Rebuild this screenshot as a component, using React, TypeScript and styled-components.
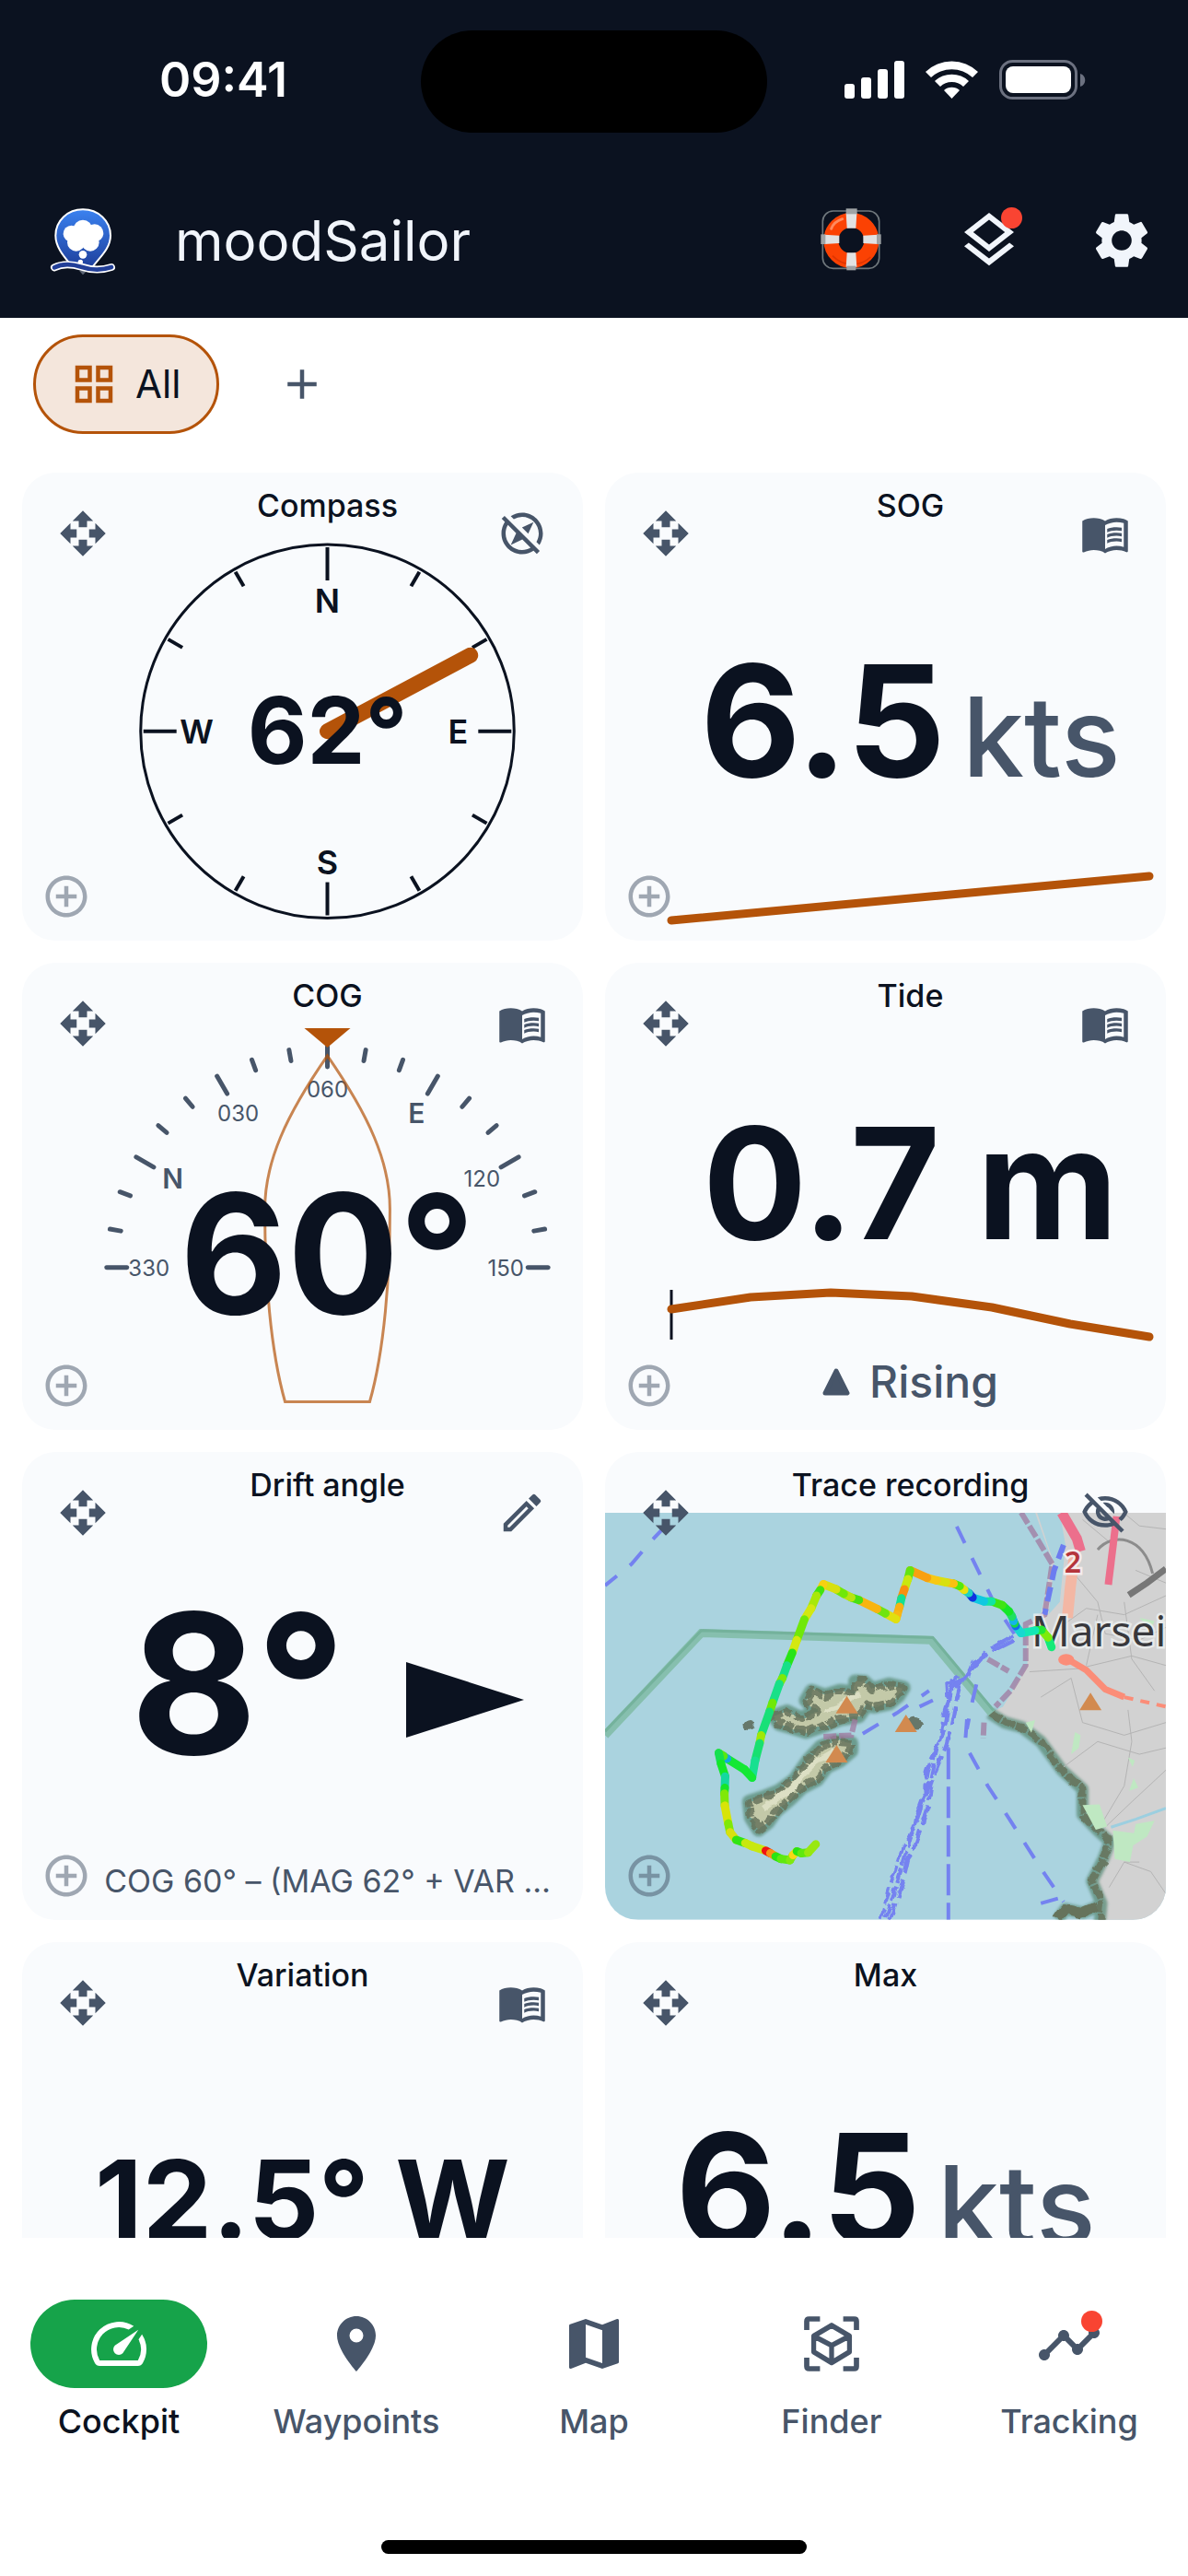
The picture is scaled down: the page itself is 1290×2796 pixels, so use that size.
import React from 'react';
import styled, { createGlobalStyle } from 'styled-components';
import {
  MdAdd,
  MdAddCircleOutline,
  MdGridView,
  MdLocationOn,
  MdMap,
  MdMenuBook,
  MdOpenWith,
  MdOutlineEdit,
  MdOutlineExploreOff,
  MdOutlineLayers,
  MdOutlineSpeed,
  MdOutlineVisibilityOff,
  MdSettings,
  MdTimeline,
} from 'react-icons/md';

const ink = '#0b1220';
const slate = '#475569';
const amber = '#b45309';
const paper = '#f9fbfd';
const alert = '#f94432';

const GlobalStyle = createGlobalStyle`
  * { box-sizing: border-box; }
  body {
    margin: 0;
    background: #fff;
    color: ${ink};
    font-family: Inter, Roboto, "Liberation Sans", sans-serif;
  }
  button { font: inherit; color: inherit; border: 0; padding: 0; background: none; cursor: pointer; }
`;

const Screen = styled.div`
  height: 100vh;
  display: flex;
  flex-direction: column;
  overflow: hidden;
`;

/* ---------- Header ---------- */

const Header = styled.header`
  background: ${ink};
  color: #f1f5fb;
  flex: none;
`;

const StatusBar = styled.div`
  display: grid;
  grid-template-columns: 1fr 376px 1fr;
  align-items: center;
  height: 177px;
  color: #fff;
`;

const StatusSide = styled.div<{ $side: 'left' | 'right' }>`
  display: flex;
  justify-content: center;
  align-items: center;
  gap: 24px;
  padding-bottom: 4px;
  ${(p) => (p.$side === 'left' ? 'padding-left: 28px;' : 'padding-right: 28px;')}
  font-size: 52px;
  line-height: 60px;
  font-weight: 600;
`;

const Island = styled.div`
  height: 111px;
  border-radius: 56px;
  background: #000;
`;

const AppBar = styled.div`
  display: flex;
  align-items: center;
  height: 168px;
  padding-left: 50px;
`;

const AppTitle = styled.h1`
  flex: 1;
  margin: 0 0 0 56px;
  font-size: 60px;
  line-height: 72px;
  font-weight: 400;
`;

const BarButton = styled.button<{ $wide?: boolean }>`
  display: grid;
  place-items: center;
  width: ${(p) => (p.$wide ? 156 : 144)}px;
  height: 144px;
`;

const IconWithBadge = styled.span`
  position: relative;
  display: grid;
`;

const Badge = styled.span`
  position: absolute;
  top: 0;
  right: 0;
  width: 23px;
  height: 23px;
  border-radius: 50%;
  background: ${alert};
`;

/* ---------- Page tabs ---------- */

const Tabs = styled.div`
  display: flex;
  align-items: center;
  gap: 36px;
  flex: none;
  padding: 18px 36px;
`;

const Chip = styled.button`
  && {
    display: flex;
    align-items: center;
    gap: 18px;
    height: 108px;
    padding: 0 39px 0 36px;
    border: 3px solid ${amber};
    border-radius: 54px;
    background: #f4e6dc;
    font-size: 42px;
    line-height: 54px;
  }
  svg { color: ${amber}; }
`;

const AddTab = styled.button`
  && { color: ${slate}; }
  display: grid;
  place-items: center;
  width: 108px;
  height: 108px;
`;

/* ---------- Cards ---------- */

const Board = styled.main`
  flex: 1;
  min-height: 0;
  overflow: hidden;
  display: grid;
  grid-template-columns: 1fr 1fr;
  grid-auto-rows: max-content;
  gap: 24px;
  padding: 24px 24px 0;
`;

const CardBox = styled.section<{ $inset: boolean }>`
  position: relative;
  display: flex;
  flex-direction: column;
  aspect-ratio: 6 / 5;
  min-width: 0;
  overflow: hidden;
  border-radius: 36px;
  background: ${paper};
  padding: 12px 12px 12px ${(p) => (p.$inset ? 66 : 12)}px;
`;

const CardTitle = styled.h2`
  margin: 0 0 6px;
  text-align: center;
  font-size: 34px;
  line-height: 48px;
  font-weight: 500;
`;

const Corner = styled.button<{ $at: 'move' | 'action' | 'add' }>`
  position: absolute;
  z-index: 1;
  display: grid;
  place-items: center;
  ${(p) => (p.$at === 'add' ? 'width: 72px; height: 72px;' : 'width: 108px; height: 108px;')}
  ${(p) => p.$at === 'move' && 'top: 12px; left: 12px;'}
  ${(p) => p.$at === 'action' && 'top: 12px; right: 12px;'}
  ${(p) => p.$at === 'add' && 'bottom: 12px; left: 12px; opacity: 0.5;'}
  && { color: ${slate}; }
`;

const Drawing = styled.svg`
  display: block;
  flex: 1;
  width: 100%;
  min-height: 0;
`;

const Stack = styled.div`
  flex: 1;
  min-height: 0;
  display: grid;
  > * { grid-area: 1 / 1; }
`;

const Reading = styled.div`
  display: flex;
  align-items: baseline;
  justify-content: center;
  align-self: center;
  gap: 18px;
  padding-bottom: 6px;
  white-space: nowrap;
`;

const Big = styled.span<{ $size: number }>`
  font-size: ${(p) => p.$size}px;
  line-height: 200px;
  font-weight: 700;
  white-space: pre;
`;

const Unit = styled.span`
  font-size: 120px;
  line-height: 200px;
  font-weight: 500;
  color: ${slate};
`;

const Trend = styled.svg`
  display: block;
  align-self: end;
  width: 100%;
  height: 66px;
  overflow: visible;
`;

const TideBody = styled.div`
  flex: 1;
  display: flex;
  flex-direction: column;
  align-items: center;
  justify-content: flex-end;
  gap: 14px;
`;

const TideForecast = styled.div`
  width: 100%;
`;

const TideState = styled.div`
  display: flex;
  align-items: center;
  justify-content: center;
  gap: 21px;
  padding-bottom: 4px;
  font-size: 48px;
  line-height: 72px;
  font-weight: 500;
  color: ${slate};
`;

const DriftRow = styled.div`
  flex: 1;
  display: flex;
  align-items: center;
  justify-content: center;
  gap: 66px;
`;

const DriftArrow = styled.svg`
  margin-top: 36px;
`;

const Formula = styled.p`
  margin: 0;
  text-align: center;
  font-size: 34px;
  line-height: 60px;
  color: ${slate};
  white-space: nowrap;
`;

const Centered = styled.div`
  flex: 1;
  display: flex;
  align-items: center;
  justify-content: center;
`;

const MapFrame = styled.div`
  flex: 1;
  min-height: 0;
  display: flex;
  margin: 0 -12px -12px -66px;
`;

interface CardProps {
  title: string;
  action?: React.ReactNode;
  actionLabel?: string;
  inset?: boolean;
  children: React.ReactNode;
}

function Card({ title, action, actionLabel, inset = true, children }: CardProps) {
  return (
    <CardBox $inset={inset} aria-label={title}>
      <CardTitle>{title}</CardTitle>
      <Corner $at="move" type="button" aria-label={`Move ${title}`}>
        <MdOpenWith size={54} />
      </Corner>
      {action && (
        <Corner $at="action" type="button" aria-label={actionLabel}>
          {action}
        </Corner>
      )}
      {children}
      {inset && (
        <Corner $at="add" type="button" aria-label={`Add beside ${title}`}>
          <MdAddCircleOutline size={54} />
        </Corner>
      )}
    </CardBox>
  );
}

/* ---------- Instruments ---------- */

const polar = (deg: number, r: number): [number, number] => [
  Math.sin((deg * Math.PI) / 180) * r,
  -Math.cos((deg * Math.PI) / 180) * r,
];

function Spoke({ deg, from, to, ...rest }: { deg: number; from: number; to: number } & React.SVGProps<SVGLineElement>) {
  const [x1, y1] = polar(deg, from);
  const [x2, y2] = polar(deg, to);
  return <line x1={x1} y1={y1} x2={x2} y2={y2} {...rest} />;
}

function Compass() {
  const marks = Array.from({ length: 12 }, (_, i) => i * 30);
  return (
    <Drawing viewBox="-265 -215 530 430">
      <circle r={203} fill="none" stroke={ink} strokeWidth={3} />
      {marks.map((d) => (
        <Spoke key={d} deg={d} from={d % 90 ? 182 : 164} to={200} stroke={ink} strokeWidth={4} />
      ))}
      {['N', 'E', 'S', 'W'].map((letter, i) => {
        const [x, y] = polar(i * 90, 142);
        return (
          <text key={letter} x={x} y={y + 13} textAnchor="middle" fontSize={36} fontWeight={600} fill={ink}>
            {letter}
          </text>
        );
      })}
      <Spoke deg={62} from={0} to={176} stroke={amber} strokeWidth={17} strokeLinecap="round" />
      <text x={0} y={35} textAnchor="middle" fontSize={100} fontWeight={700} fill={ink}>
        62°
      </text>
    </Drawing>
  );
}

function CourseDial() {
  const marks = Array.from({ length: 19 }, (_, i) => i * 10 - 90);
  const labels: [number, string][] = [
    [-90, '330'],
    [-60, 'N'],
    [-30, '030'],
    [0, '060'],
    [30, 'E'],
    [60, '120'],
    [90, '150'],
  ];
  return (
    <Drawing viewBox="-265 -265 530 430">
      {marks.map((d) => (
        <Spoke key={d} deg={d} from={d % 30 ? 228 : 218} to={240} stroke={slate} strokeWidth={5} strokeLinecap="round" />
      ))}
      {labels.map(([deg, label]) => {
        const [x, y] = polar(deg, 194);
        const cardinal = label.length === 1;
        return (
          <text
            key={label}
            x={x}
            y={y + (cardinal ? 11 : 9)}
            textAnchor="middle"
            fontSize={cardinal ? 30 : 24}
            fontWeight={cardinal ? 600 : 400}
            fill={slate}
          >
            {label}
          </text>
        );
      })}
      <path
        d="M0 -230C45 -165 68 -115 68 -63C68 10 62 90 46 146H-46C-62 90 -68 10 -68 -63C-68 -115 -45 -165 0 -230Z"
        fill="none"
        stroke={amber}
        strokeOpacity={0.7}
        strokeWidth={3}
      />
      <path d="M-25 -260H25L0 -239Z" fill={amber} />
      <text x={0} y={50} textAnchor="middle" fontSize={180} fontWeight={700} fill={ink}>
        60°
      </text>
    </Drawing>
  );
}

const track: [number, number, string][] = [
  [1208, 662, '#14e6a0'], [1199, 632, '#14ea78'], [1182, 608, '#7eea0c'], [1165, 610, '#22e836'], [1128, 618, '#14e8b4'],
  [1114, 596, '#18d8d0'], [1111, 588, '#1468f0'], [1108, 580, '#16d848'], [1104, 566, '#14b4e8'], [1096, 550, '#20e060'],
  [1078, 530, '#14e628'], [1050, 518, '#40e414'], [1030, 518, '#12e4a4'], [1000, 506, '#10c8e0'], [990, 492, '#1030e0'],
  [978, 482, '#20d0c0'], [966, 470, '#e8e010'], [950, 462, '#54e810'], [930, 458, '#fcc010'], [905, 452, '#d8e010'],
  [880, 444, '#f8c814'], [835, 420, '#f8a010'], [829, 448, '#64e410'], [820, 480, '#c8e810'], [812, 508, '#f89010'],
  [807, 535, '#14e090'], [801, 560, '#f8b010'], [798, 574, '#f8b814'], [770, 556, '#e0e010'], [748, 542, '#70e410'],
  [700, 514, '#f8b410'], [680, 506, '#48e010'], [660, 494, '#b8e410'], [640, 480, '#70e808'], [606, 464, '#d8e010'],
  [598, 482, '#f8d010'], [588, 500, '#40e410'], [574, 540, '#a8e808'], [556, 575, '#d4e810'], [536, 640, '#70e808'],
  [524, 680, '#d4e810'], [510, 720, '#28e418'], [498, 760, '#18e088'], [490, 778, '#80e808'], [472, 838, '#18e088'],
  [464, 866, '#70e808'], [442, 940, '#18e078'], [438, 965, '#a0e808'], [426, 1020, '#18e070'], [418, 1074, '#18e090'],
  [398, 1048, '#14e834'], [352, 1014, '#14e834'], [343, 1006, '#14a8e0'], [330, 996, '#58e810'], [336, 1030, '#14e050'],
  [347, 1070, '#14e828'], [346, 1106, '#14d8a0'], [345, 1124, '#18e428'], [346, 1162, '#80e808'], [355, 1218, '#d8e408'],
  [360, 1246, '#80e808'], [376, 1270, '#d8e010'], [400, 1280, '#30e414'], [418, 1290, '#c8e810'], [454, 1304, '#c8e810'],
  [466, 1312, '#f01414'], [480, 1322, '#f89414'], [494, 1330, '#28e414'], [518, 1334, '#60e810'], [526, 1318, '#80e810'],
  [536, 1306, '#f8d814'], [548, 1312, '#28e414'], [566, 1310, '#60e810'], [586, 1284, '#98e810'],
];

function TraceMap() {
  const fine = { vectorEffect: 'non-scaling-stroke' as const, fill: 'none' };
  const shore =
    'M1045 870L1085 900L1130 915L1180 960L1235 1050L1290 1110L1290 1190L1330 1240L1362 1275L1345 1330L1315 1400L1340 1470L1335 1540';
  const land = `M1165 238L1210 390L1180 560L1140 600L1145 720L1120 770L1080 850${shore.replace('M', 'L')}H1510V238Z`;
  const island1 =
    'M475 880L510 865L545 885L590 870L560 830L575 800L610 815L650 800L690 805L690 770L715 772L735 795L780 780L818 790L805 815L780 840L740 850L720 845L700 880L650 890L620 905L560 930L520 915L490 905Z';
  const island2 =
    'M600 975L640 958L680 965L680 990L650 1020L615 1040L590 1080L550 1105L520 1140L480 1180L460 1215L435 1238L415 1200L410 1150L450 1135L490 1115L530 1080L565 1020Z';
  const ferry = [
    'M960 750C930 800 940 860 925 920C900 980 900 1040 880 1110C860 1170 840 1240 825 1310C810 1380 790 1440 770 1522',
    'M948 760C945 830 915 880 915 960C890 1010 870 1060 875 1130C850 1200 850 1260 815 1290C800 1350 780 1420 758 1522',
    'M970 770C950 850 950 890 935 950C925 1010 890 1060 885 1150C860 1220 860 1280 830 1330C820 1390 800 1460 782 1522',
    'M1110 640L1060 670L1020 700L985 750L955 790',
    'M1110 625L1050 665L1010 710L975 760L940 800',
    'M1030 690L1000 710L985 760L930 780L935 860',
  ];
  const peaks = [[668, 845], [824, 904], [641, 1000], [1311, 835]];
  return (
    <Drawing viewBox="0 0 609 442" preserveAspectRatio="xMidYMid slice" role="img" aria-label="Recorded trace off Marseille">
      <defs>
        <filter id="halo" x="-10%" y="-10%" width="120%" height="120%">
          <feGaussianBlur stdDeviation="4" />
        </filter>
        <filter id="rugged" x="-10%" y="-10%" width="120%" height="120%">
          <feTurbulence type="fractalNoise" baseFrequency="0.03" numOctaves="2" seed="4" />
          <feDisplacementMap in="SourceGraphic" scale="24" xChannelSelector="R" yChannelSelector="G" />
          <feGaussianBlur stdDeviation="1.6" />
        </filter>
        <filter id="wavy" x="-20%" y="-5%" width="140%" height="110%">
          <feTurbulence type="fractalNoise" baseFrequency="0.03" numOctaves="2" seed="9" />
          <feDisplacementMap in="SourceGraphic" scale="18" xChannelSelector="R" yChannelSelector="G" />
        </filter>
      </defs>
      <svg width={609} height={442} viewBox="30 238 1480 1284" preserveAspectRatio="none">
        <rect x={30} y={238} width={1480} height={1284} fill="#aad3df" />
        <path d={land} fill="#d2d2d2" />
        <g filter="url(#halo)" strokeLinejoin="round" opacity={0.8}>
          <path {...fine} d={shore} stroke="#5f8f7c" strokeWidth={13} />
          <path {...fine} d={island1} stroke="#5d8f7c" strokeWidth={15} />
          <path {...fine} d={island2} stroke="#5d8f7c" strokeWidth={15} />
          <path {...fine} d="M1225 1522L1245 1488L1290 1500L1330 1480" stroke="#5f8f7c" strokeWidth={13} />
        </g>
        <g filter="url(#rugged)" strokeLinejoin="round">
          <path d={island1} fill="#c3c9a8" />
          <path d={island2} fill="#c3c9a8" />
          <path {...fine} d={island1} stroke="#66735c" strokeWidth={9} strokeDasharray="10 2" strokeOpacity={0.85} />
          <path {...fine} d={island2} stroke="#66735c" strokeWidth={9} strokeDasharray="10 2" strokeOpacity={0.85} />
          <path {...fine} d="M610 860L650 845L700 810M450 1170L520 1110L590 1020L640 985" stroke="#dcdfc4" strokeWidth={6} />
          <path {...fine} d={shore} stroke="#66735c" strokeWidth={8} strokeDasharray="14 2" strokeOpacity={0.85} />
          <path {...fine} d="M1225 1522L1245 1488L1290 1500L1330 1480" stroke="#66735c" strokeWidth={10} />
          <ellipse cx={412} cy={908} rx={16} ry={16} fill="#66776a" />
          <ellipse cx={848} cy={900} rx={20} ry={20} fill="#66776a" />
        </g>
        {/* marine park boundary */}
        <path {...fine} d="M30 940L284 618L890 640L1050 870" stroke="#86bfae" strokeWidth={9} />
        <path {...fine} d="M30 928L284 610L895 632L1055 862" stroke="#74b29c" strokeWidth={3} />
        {/* street grid */}
        <g stroke="#b4b4b4" strokeWidth={1}>
          <path {...fine} d="M1230 600L1300 540L1400 560L1510 500M1260 420L1330 520L1350 620L1440 640L1510 600M1150 740L1280 730L1420 690L1510 720M1400 520L1420 700L1480 800M1330 560L1300 720M1180 820L1260 760L1290 900L1400 940L1510 900M1240 1040L1330 960L1440 1000L1510 980M1350 1230L1420 1150L1510 1050M1410 860L1420 960L1400 1100L1340 1220M1290 260L1360 330M1400 240L1440 280L1510 290M1430 420L1510 460M1440 1340L1400 1340L1360 1420M1400 1340L1470 1370L1510 1440" />
        </g>
        <path {...fine} d="M1330 355C1370 300 1450 310 1475 430" stroke="#8c8c8c" strokeWidth={3} />
        <path {...fine} d="M1412 498L1460 460L1510 415" stroke="#777" strokeWidth={7} />
        <path d="M1140 900l25 -8l-10 40zM1270 930l15 10l-5 40l-20 20zM1290 1160l45 -2l20 70l-30 10zM1370 1240l60 10l-15 90l-40 -10zM1430 1220l50 -10l-20 50l-40 30zM1440 570l40 10l-10 25zM1410 1010l18 10l-6 20zM1425 1075l12 30l-24 10z" fill="#bfe8c2" />
        <path {...fine} d="M1365 1230L1430 1205L1510 1170" stroke="#9ccfe0" strokeWidth={3} />
        {/* harbour wall and main roads */}
        <path d="M1170 238L1230 238L1245 340L1230 520L1200 560L1215 400Z" fill="#aad3df" />
        <path {...fine} d="M1128 238L1170 320L1210 400L1190 560L1140 590L1140 720L1100 800L1060 850M1040 700L1095 738M1030 900L1028 950M690 890L680 940L600 945" stroke="#a07aa0" strokeWidth={6} strokeOpacity={0.75} strokeDasharray="14 3" />
        <path {...fine} d="M1240 340L1215 420L1190 560" stroke="#6c7cf0" strokeWidth={6} strokeDasharray="16 8" />
        <path {...fine} d="M1270 360L1258 470L1250 570" stroke="#f3b7a4" strokeWidth={12} />
        <path {...fine} d="M1235 238L1275 320L1285 360" stroke="#ec6f8c" strokeWidth={11} />
        <path {...fine} d="M1380 250L1358 465" stroke="#ec6f8c" strokeWidth={8} />
        <path {...fine} d="M1250 700L1300 735L1350 795L1400 820" stroke="#fb8d78" strokeWidth={7} />
        <path {...fine} d="M1400 820L1510 850" stroke="#fb8d78" strokeWidth={4} strokeDasharray="10 8" />
        <ellipse cx={1247} cy={702} rx={21} ry={18} fill="#fb8d78" />
        {/* ferry lines */}
        <g stroke="#7482f0" strokeWidth={4}>
          <g filter="url(#wavy)">
            {ferry.map((d, i) => (
              <path key={d} {...fine} d={d} strokeDasharray={`${16 + i * 3} ${4 + i}`} />
            ))}
          </g>
          <g strokeDasharray="20 18">
            <path {...fine} d="M190 280L150 330L100 400L30 468" />
            <path {...fine} d="M958 282L1010 410L1060 530L1110 620" />
            <path {...fine} d="M985 890L980 970L1040 1100L1100 1210L1180 1360L1240 1465" />
            <path {...fine} d="M710 935L800 870L885 800M860 850L895 830" />
            <path {...fine} d="M1010 780L1000 830L985 920" />
          </g>
          <path {...fine} d="M936 980V1522" strokeDasharray="34 8" />
          <path {...fine} d="M1180 1470L1225 1455" />
        </g>
      </svg>
      <text x={508} y={65} fontSize={32} fontFamily="Noto Sans, sans-serif" fontWeight={600} textAnchor="middle" fill="#b5353c" stroke="#f4ecec" strokeWidth={5} paintOrder="stroke">
        2
      </text>
      <text x={463} y={145} fontSize={46} fontFamily="Noto Sans, sans-serif" fill="#38383c" stroke="#eef1f1" strokeWidth={5} strokeOpacity={0.8} paintOrder="stroke">
        Marseille
      </text>
      {peaks.map(([x, y]) => (
        <path key={x} transform={`translate(${(x - 30) * 0.4115} ${(y - 238) * 0.3442})`} d="M0 -10L12 9H-12Z" fill="#d28a4f" />
      ))}
      <svg width={609} height={442} viewBox="30 238 1480 1284" preserveAspectRatio="none">
        {track.slice(1).map(([x, y, color], i) => (
          <path key={i} {...fine} d={`M${track[i][0]} ${track[i][1]}L${x} ${y}`} stroke={color} strokeWidth={9} strokeLinecap="round" />
        ))}
      </svg>
    </Drawing>
  );
}

/* ---------- Artwork ---------- */

function Logo() {
  const wave = 'M27 214C55 200 85 203 115 212C145 222 180 224 213 213';
  return (
    <svg width={84} height={84} viewBox="0 0 252 252" role="img" aria-label="moodSailor logo">
      <defs>
        <linearGradient id="pin" x1="0" y1="0" x2="0" y2="1">
          <stop offset="0" stopColor="#3b82f0" />
          <stop offset="1" stopColor="#1e3f9c" />
        </linearGradient>
      </defs>
      <path d="M108 224L120 238L132 226Z" fill="#5c6675" />
      <path d="M120 25C70 25 31 62 31 110C31 150 62 182 82 207L150 214C175 180 210 152 210 110C210 62 170 25 120 25Z" fill="url(#pin)" stroke="#fff" strokeWidth={6} />
      <g fill="#fff">
        <circle cx={120} cy={90} r={31} />
        <circle cx={83} cy={104} r={27} />
        <circle cx={158} cy={102} r={29} />
        <circle cx={98} cy={132} r={29} />
        <circle cx={144} cy={132} r={29} />
        <circle cx={120} cy={172} r={13} />
        <circle cx={112} cy={196} r={8} />
      </g>
      <path d={wave} fill="none" stroke="#fff" strokeWidth={24} strokeLinecap="round" />
      <path d={wave} fill="none" stroke="#223f98" strokeWidth={14} strokeLinecap="round" />
    </svg>
  );
}

function Lifebuoy() {
  return (
    <svg width={84} height={84} viewBox="0 0 252 252" aria-hidden="true">
      <rect x={34} y={30} width={184} height={187} rx={34} fill="none" stroke="#6f777c" strokeWidth={5} />
      <circle cx={127} cy={126} r={66} fill="none" stroke="#fb4203" strokeWidth={48} />
      <path d="M66 176A88 88 0 0 0 190 180" fill="none" stroke="#df3502" strokeWidth={5} />
      <path d="M62 88C68 70 80 62 98 56" fill="none" stroke="#ff8a5e" strokeWidth={9} strokeLinecap="round" />
      <g fill="#e2e2e2">
        <path d="M110 38H145L142 86H113Z" />
        <path d="M113 166H142L145 212H110Z" />
        <path d="M40 107L88 110V135L40 138Z" />
        <path d="M166 110L214 107V138L166 135Z" />
      </g>
      <g fill="#9fa3a5">
        <rect x={110} y={22} width={36} height={18} />
        <rect x={112} y={209} width={30} height={14} />
        <rect x={28} y={106} width={15} height={32} />
        <rect x={210} y={106} width={14} height={32} />
      </g>
    </svg>
  );
}

function StatusIcons() {
  return (
    <svg width={262} height={44} viewBox="0 0 262 44" fill="#fff" role="img" aria-label="Signal, Wi-Fi and battery">
      <rect x={0} y={26} width={11} height={16} rx={3} />
      <rect x={18} y={19} width={11} height={23} rx={3} />
      <rect x={36} y={10} width={11} height={32} rx={3} />
      <rect x={54} y={1} width={11} height={41} rx={3} />
      <path d="M88 13A41 41 0 0 1 145 13L139 19A33 33 0 0 0 94 19Z" />
      <path d="M98 23A27 27 0 0 1 135 23L129 29A18 18 0 0 0 104 29Z" />
      <path d="M108 33A13 13 0 0 1 125 33L116.500 42Z" />
      <rect x={169.500} y={1.500} width={82} height={40} rx={13} fill="none" stroke="#6c7180" strokeWidth={3} />
      <rect x={175} y={7} width={71} height={29} rx={8} />
      <path d="M256 15C263 17 263 27 256 29Z" fill="#6c7180" />
    </svg>
  );
}

function FinderIcon() {
  return (
    <svg width={72} height={72} viewBox="0 0 24 24" fill="none" stroke="currentColor" strokeWidth={1.9} aria-hidden="true">
      <path d="M3 7V3.800Q3 3 3.800 3H7.800M16.200 3H20.200Q21 3 21 3.800V7M21 17V20.200Q21 21 20.200 21H16.200M7.800 21H3.800Q3 21 3 20.200V17" />
      <path strokeLinejoin="round" d="M12 5.300L19 9.200V14.900L12 18.800L5 14.900V9.200ZM5 9.200L12 12.600L19 9.200M12 12.600V18.800" transform="translate(0.900 0) scale(0.925 1)" />
    </svg>
  );
}

/* ---------- Bottom navigation ---------- */

const Nav = styled.nav`
  flex: none;
  background: #fff;
  padding: 67px 0 24px;
`;

const NavList = styled.div`
  display: grid;
  grid-template-columns: repeat(5, 1fr);
  margin-bottom: 105px;
`;

const NavLink = styled.a<{ $active?: boolean }>`
  display: flex;
  flex-direction: column;
  align-items: center;
  gap: 12px;
  font-size: 36px;
  line-height: 48px;
  font-weight: 500;
  text-decoration: none;
  color: ${(p) => (p.$active ? ink : slate)};
`;

const Pill = styled.span<{ $active?: boolean }>`
  display: grid;
  place-items: center;
  width: 192px;
  height: 96px;
  border-radius: 48px;
  ${(p) => p.$active && 'background: #16a34a; color: #fff;'}
`;

const HomeIndicator = styled.div`
  width: 462px;
  height: 15px;
  margin: 0 auto;
  border-radius: 8px;
  background: #000;
`;

const sections = [
  { label: 'Cockpit', icon: <MdOutlineSpeed size={72} />, active: true },
  { label: 'Waypoints', icon: <MdLocationOn size={72} /> },
  { label: 'Map', icon: <MdMap size={72} /> },
  { label: 'Finder', icon: <FinderIcon /> },
  { label: 'Tracking', icon: <MdTimeline size={72} />, badge: true },
];

export default function App() {
  return (
    <Screen>
      <GlobalStyle />
      <Header>
        <StatusBar>
          <StatusSide $side="left">09:41</StatusSide>
          <Island />
          <StatusSide $side="right">
            <StatusIcons />
          </StatusSide>
        </StatusBar>
        <AppBar>
          <Logo />
          <AppTitle>moodSailor</AppTitle>
          <BarButton $wide type="button" aria-label="Emergency">
            <Lifebuoy />
          </BarButton>
          <BarButton type="button" aria-label="Layers">
            <IconWithBadge>
              <MdOutlineLayers size={72} />
              <Badge />
            </IconWithBadge>
          </BarButton>
          <BarButton type="button" aria-label="Settings">
            <MdSettings size={72} />
          </BarButton>
        </AppBar>
      </Header>

      <Tabs>
        <Chip type="button">
          <MdGridView size={54} />
          All
        </Chip>
        <AddTab type="button" aria-label="Add page">
          <MdAdd size={54} />
        </AddTab>
      </Tabs>

      <Board>
        <Card title="Compass" action={<MdOutlineExploreOff size={54} />} actionLabel="Lock compass">
          <Compass />
        </Card>

        <Card title="SOG" action={<MdMenuBook size={54} />} actionLabel="About SOG">
          <Stack>
            <Reading>
              <Big $size={168}>6.5</Big>
              <Unit>kts</Unit>
            </Reading>
            <Trend viewBox="0 0 531 66" preserveAspectRatio="none">
              <path d="M6 56L525 8" fill="none" stroke={amber} strokeWidth={9} strokeLinecap="round" />
            </Trend>
          </Stack>
        </Card>

        <Card title="COG" action={<MdMenuBook size={54} />} actionLabel="About COG">
          <CourseDial />
        </Card>

        <Card title="Tide" action={<MdMenuBook size={54} />} actionLabel="About tide">
          <TideBody>
            <Big $size={168}>0.7 m</Big>
            <TideForecast>
              <Trend viewBox="0 0 531 66" preserveAspectRatio="none">
                <path d="M6 2V56" stroke={ink} strokeWidth={3} />
                <path
                  d="M6 23L92 10L179 5L267 9L354 21L439 39L525 53"
                  fill="none"
                  stroke={amber}
                  strokeWidth={9}
                  strokeLinecap="round"
                  strokeLinejoin="round"
                />
              </Trend>
              <TideState>
                <svg width={30} height={30} viewBox="0 0 30 30" aria-hidden="true">
                  <path d="M15 3L27 27H3Z" fill="currentColor" stroke="currentColor" strokeWidth={5} strokeLinejoin="round" />
                </svg>
                Rising
              </TideState>
            </TideForecast>
          </TideBody>
        </Card>

        <Card title="Drift angle" action={<MdOutlineEdit size={54} />} actionLabel="Edit drift angle">
          <DriftRow>
            <Big $size={212}>8°</Big>
            <DriftArrow width={128} height={82} viewBox="0 0 128 82" aria-hidden="true">
              <path d="M0 0L128 41L0 82Z" fill={ink} />
            </DriftArrow>
          </DriftRow>
          <Formula>COG 60° – (MAG 62° + VAR …</Formula>
        </Card>

        <Card title="Trace recording" action={<MdOutlineVisibilityOff size={54} />} actionLabel="Hide trace">
          <MapFrame>
            <TraceMap />
          </MapFrame>
        </Card>

        <Card title="Variation" action={<MdMenuBook size={54} />} actionLabel="About variation" inset={false}>
          <Centered>
            <Big $size={120}>12.5° W</Big>
          </Centered>
        </Card>

        <Card title="Max" inset={false}>
          <Stack>
            <Reading>
              <Big $size={168}>6.5</Big>
              <Unit>kts</Unit>
            </Reading>
          </Stack>
        </Card>
      </Board>

      <Nav>
        <NavList>
          {sections.map((s) => (
            <NavLink key={s.label} href={`#${s.label.toLowerCase()}`} $active={s.active} aria-current={s.active ? 'page' : undefined}>
              <Pill $active={s.active}>
                <IconWithBadge>
                  {s.icon}
                  {s.badge && <Badge />}
                </IconWithBadge>
              </Pill>
              {s.label}
            </NavLink>
          ))}
        </NavList>
        <HomeIndicator />
      </Nav>
    </Screen>
  );
}
